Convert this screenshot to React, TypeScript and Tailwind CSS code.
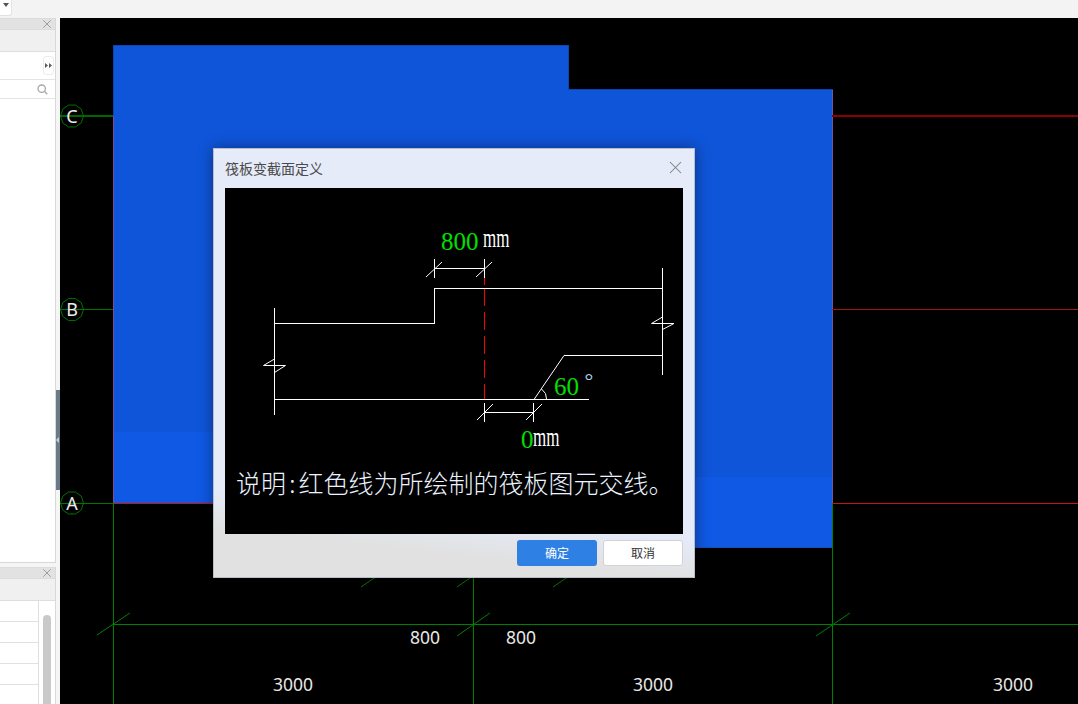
import { X } from "lucide-react";

const axes = [
  { label: "C", y: 116 },
  { label: "B", y: 309.5 },
  { label: "A", y: 503 },
];

const ticks = [
  [97, 635, 130, 613],
  [457, 636, 490, 613],
  [816, 636, 850, 613],
  [361, 587, 395, 564],
  [457, 587, 490, 564],
  [553, 587, 587, 564],
];

const dims = [
  { text: "800", x: 425, y: 643.5 },
  { text: "800", x: 521, y: 643.5 },
  { text: "3000", x: 293, y: 691 },
  { text: "3000", x: 653, y: 691 },
  { text: "3000", x: 1013, y: 691 },
];

function polygon(cx: number, cy: number, r: number) {
  const pts: string[] = [];
  for (let i = 0; i < 10; i++) {
    const a = (i * Math.PI) / 5;
    pts.push(`${cx + r * Math.cos(a)},${cy + r * Math.sin(a)}`);
  }
  return pts.join(" ");
}

function CanvasDrawing() {
  return (
    <svg className="absolute inset-0 w-full h-full" viewBox="60 18 1018 686" shapeRendering="crispEdges">
      {/* slab */}
      <polygon points="113,45 569,45 569,89 833,89 833,547 473,547 473,503 113,503" fill="#0f55d9" />
      <rect x="113" y="432" width="360" height="71" fill="#0f59e4" />
      <rect x="473" y="477" width="360" height="70" fill="#0f59e4" />
      <path d="M113.5 503V45.5H568.5V89.5H832.5" fill="none" stroke="#0c46b4" />
      <path d="M113.5 116V503" stroke="#86479a" />
      <path d="M832.5 90V503" stroke="#7a4fa8" />
      <path d="M473 547.5H832" stroke="#1a4fb8" />

      {/* axis lines */}
      <path d="M60 116H113" stroke="#006400" strokeWidth="2" />
      <path d="M60 309.5H113" stroke="#007800" />
      <path d="M60 503.5H113" stroke="#007800" />
      <path d="M832 116H1078" stroke="#8b0000" strokeWidth="2" />
      <path d="M832 309.5H1078" stroke="#a81010" />
      <path d="M113 503.5H473M832 503.5H1078" stroke="#c81414" />

      {/* dimension lines */}
      <path d="M113.5 503V704M473.5 560V704M832.5 503V704M113 624.5H1078" stroke="#008000" fill="none" />
      <g shapeRendering="auto">
        {ticks.map(([x1, y1, x2, y2], i) => (
          <line key={i} x1={x1} y1={y1} x2={x2} y2={y2} stroke="#008000" />
        ))}
        {axes.map((a) => (
          <polygon key={a.label} points={polygon(72, a.y, 11.5)} fill="none" stroke="#007400" />
        ))}
        {axes.map((a) => (
          <text
            key={a.label}
            x={72}
            y={a.y + 6.5}
            textAnchor="middle"
            fontSize="18"
            fill="#ececec"
            fontFamily="'Noto Sans', sans-serif"
          >
            {a.label}
          </text>
        ))}
        {dims.map((d) => (
          <text
            key={d.x}
            x={d.x}
            y={d.y}
            textAnchor="middle"
            fontSize="17.5"
            fill="#e8e8e8"
            fontFamily="'Noto Sans', sans-serif"
          >
            {d.text}
          </text>
        ))}
      </g>
    </svg>
  );
}

function SectionDiagram() {
  return (
    <svg className="block w-[458px] h-[278px]" viewBox="225 188 458 278" fill="none" shapeRendering="crispEdges">
      <path d="M484.5 278V285M484.5 288V399" stroke="#ff0000" strokeDasharray="17.5 6.5" />
      <g stroke="#ffffff">
        <path d="M274.5 308V414.5M274.5 323.5H434.5V288.5H662.5M662.5 268V374.5M564 355.5H662.5M274.5 399.5H589" />
        <path d="M434.5 268.5H484.5M434.5 259V277.5M484.5 259V277.5" />
        <path d="M484.5 412.5H533.5M484.5 402.5V421.5M533.5 402.5V421.5" />
        <g shapeRendering="auto">
          <path d="M564 355.5L534 399.5" />
          <path d="M426 277L442 262M476 277L492 262M477 420L493 404M526 420L542 404" />
          <path d="M541.5 389Q547 393 546.5 399" />
          <path d="M274.5 359L263.5 365.5H285.5L274.5 372.5" />
          <path d="M662.5 317L651.5 323.5H674L662.5 329.5" />
        </g>
      </g>
      <g fontFamily="'Liberation Serif', serif" stroke="none">
        <text x="441" y="250" fontSize="25" fill="#00e000">800</text>
        <text transform="translate(483 247) scale(1 1.6)" fontSize="17" fill="#ffffff">mm</text>
        <text x="554" y="395" fontSize="25" fill="#00e000">60</text>
        <text x="584.6" y="388" fontSize="22" fill="#b8d0ee">°</text>
        <text x="521" y="448" fontSize="25" fill="#00e000">0</text>
        <text transform="translate(533 446) scale(1 1.6)" fontSize="17" fill="#ffffff">mm</text>
      </g>
    </svg>
  );
}

function Dialog() {
  return (
    <div className="absolute left-[153px] top-[130px] w-[482px] h-[430px] flex flex-col border border-[#b9bdc6] bg-[linear-gradient(186deg,#e5ebf9_81.5%,#e1e1e1_90%)] shadow-[0_0_14px_rgba(0,0,0,0.4)]">
      <div className="h-[39px] shrink-0 flex items-center justify-between pl-[11px] pr-[8px] pb-[2px]">
        <span className="text-[14px] leading-[20px] text-[#4a4a4a]">筏板变截面定义</span>
        <X size={21} strokeWidth={1.2} className="text-[#808080]" />
      </div>
      <div className="mx-[11px] h-[346px] shrink-0 bg-black">
        <SectionDiagram />
        <p className="pl-[11px] text-[25px] leading-[32px] font-light text-[#eaf3ff] whitespace-nowrap">
          说明<span className="inline-block w-[12.5px] text-center">:</span>红色线为所绘制的筏板图元交线。
        </p>
      </div>
      <div className="flex justify-end gap-[6px] px-[11px] pt-[6px]">
        <button className="w-[80px] h-[26px] rounded-[3px] bg-[#2f80e4] text-[12px] text-white">确定</button>
        <button className="w-[80px] h-[26px] rounded-[3px] border border-[#d2d2d2] bg-white text-[12px] text-[#333333]">
          取消
        </button>
      </div>
    </div>
  );
}

function PanelHeader() {
  return (
    <div className="h-[12px] shrink-0 flex items-center justify-end pr-[1px] bg-[#e2e2e2] border-y border-[#dcdcdc]">
      <X size={14} strokeWidth={1.6} className="text-[#999999]" />
    </div>
  );
}

function Sidebar() {
  return (
    <div className="relative w-[60px] shrink-0 flex flex-col bg-[#f5f5f5]">
      <div className="w-[56px] h-[545px] flex flex-col bg-white border-r border-[#d8d8d8] border-b">
        <PanelHeader />
        <div className="h-[22px] shrink-0 bg-[#f0f0f0] border-b border-[#dedede]" />
        <div className="h-[28px] shrink-0 flex items-center justify-end pr-[1px] border-b border-[#e4e4e4]">
          <div className="w-[11px] h-[19px] flex items-center justify-center rounded-[3px] border border-[#ececec]">
            <svg width="7" height="5" viewBox="0 0 7 5" fill="#555b66">
              <path d="M0 0L3 2.5L0 5ZM4 0L7 2.5L4 5Z" />
            </svg>
          </div>
        </div>
        <div className="h-[19px] shrink-0 flex items-center justify-end pr-[7px] border-b border-[#e4e4e4]">
          <svg width="11" height="11" viewBox="0 0 11 11" fill="none" stroke="#a8a8a8" strokeWidth="1.3">
            <circle cx="4.7" cy="4.7" r="3.7" />
            <path d="M7.5 7.5L10.3 10.3" />
          </svg>
        </div>
        <div className="flex-1" />
      </div>
      <div className="mt-[4px] w-[56px] flex-1 flex flex-col bg-white border-r border-[#d8d8d8] overflow-hidden">
        <PanelHeader />
        <div className="h-[22px] shrink-0 bg-[#f0f0f0] border-b border-[#dedede]" />
        <div className="flex-1 flex">
          <div className="w-[39px] border-r border-[#dedede]">
            {[0, 1, 2, 3, 4].map((r) => (
              <div key={r} className="h-[21px] border-b border-[#e0e0e0]" />
            ))}
          </div>
          <div className="flex-1 pl-[4px] pt-[14px]">
            <div className="w-[8px] h-[120px] rounded-t-[4px] bg-[#c9c9c9]" />
          </div>
        </div>
      </div>
      {/* splitter handle */}
      <div className="absolute left-[56px] top-[372px] w-[4px] h-[100px] flex items-center bg-[#6b7a88]">
        <div className="w-0 h-0 border-y-[3px] border-y-transparent border-r-[3px] border-r-[#c8ced4]" />
      </div>
    </div>
  );
}

export default function App() {
  return (
    <div className="w-[1078px] h-[704px] flex flex-col overflow-hidden bg-[#f3f3f3] font-['Noto_Sans_CJK_SC','Noto_Sans',sans-serif]">
      <div className="h-[18px] shrink-0 bg-[#f3f3f3]">
        <div className="w-[12px] h-[16px] flex justify-center pt-[2px] bg-white border-r border-b border-[#e2e2e2] rounded-br-[3px]">
          <div className="w-0 h-0 mt-[1px] border-x-[3px] border-x-transparent border-t-[4px] border-t-[#555555]" />
        </div>
      </div>
      <div className="flex-1 flex min-h-0">
        <Sidebar />
        <div className="relative flex-1 bg-black overflow-hidden">
          <CanvasDrawing />
          <Dialog />
        </div>
      </div>
    </div>
  );
}
